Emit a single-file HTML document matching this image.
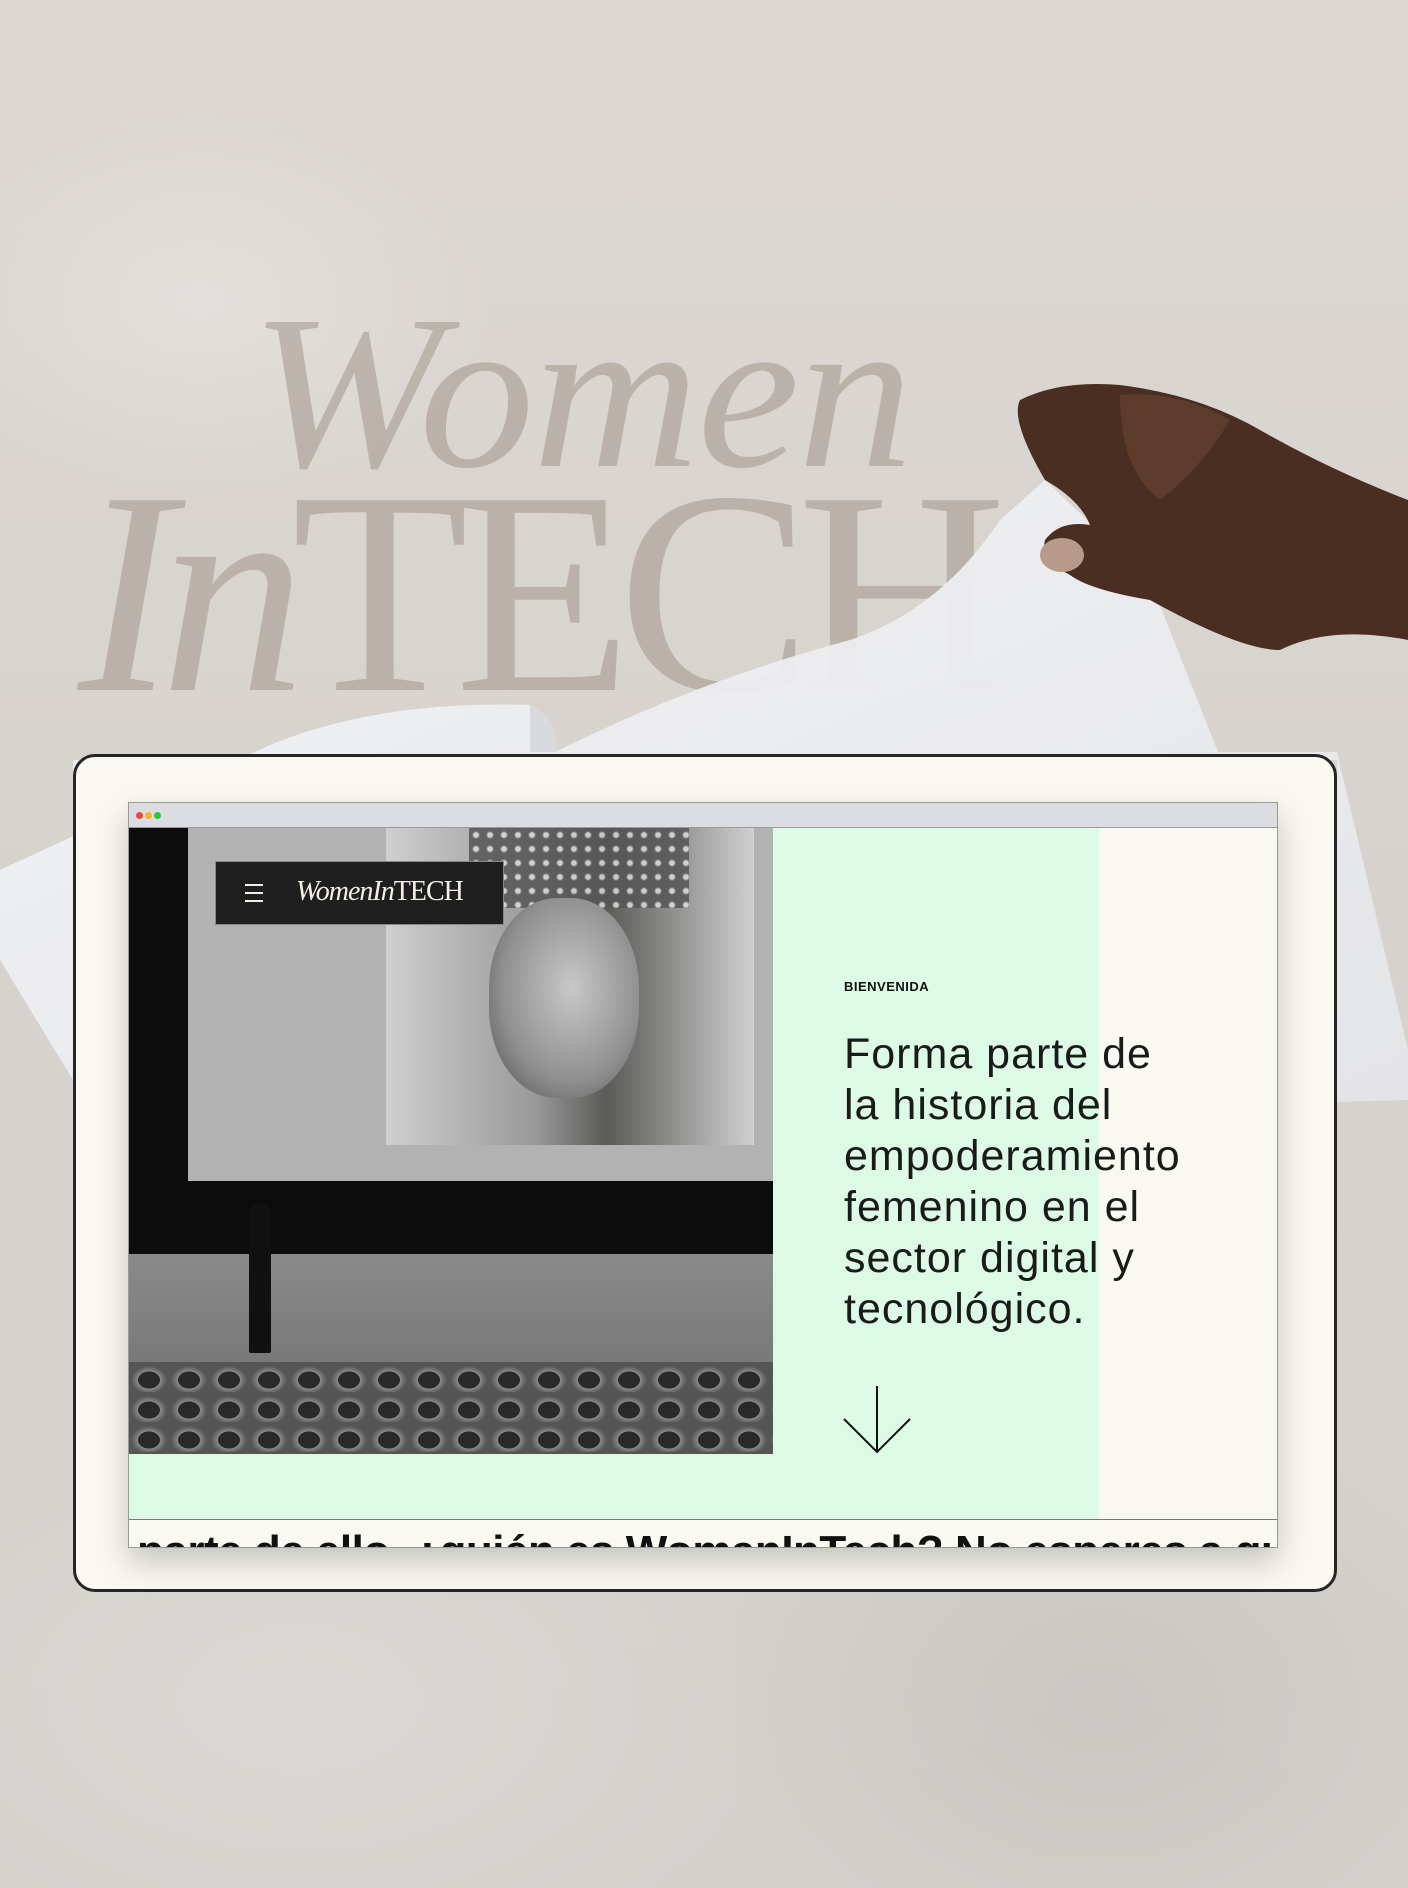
<!DOCTYPE html>
<html><head><meta charset="utf-8"><style>
*{margin:0;padding:0;box-sizing:border-box}
body{width:1408px;height:1888px;overflow:hidden;position:relative;background:#d9d4cf;font-family:"Liberation Sans",sans-serif}
.bg{position:absolute;inset:0;background:
radial-gradient(ellipse 300px 200px at 200px 300px,rgba(255,255,255,.25),transparent),
radial-gradient(ellipse 400px 300px at 1100px 1700px,rgba(0,0,0,.05),transparent),
radial-gradient(ellipse 500px 300px at 300px 1700px,rgba(255,255,255,.15),transparent),
linear-gradient(180deg,#dcd7d2,#d6d2cd 50%,#d4d1cd)}
.big{position:absolute;font-family:"Liberation Serif",serif;color:#9d9186;opacity:.5;white-space:nowrap;line-height:1;transform-origin:0 0}
.card{position:absolute;left:73px;top:754px;width:1264px;height:838px;background:#faf9f1;border:3px solid #262626;border-radius:22px}
.win{position:absolute;left:128px;top:802px;width:1150px;height:746px;background:#faf9f1;box-shadow:0 14px 30px rgba(0,0,0,.22);overflow:hidden;border:1px solid #999}
.tb{position:absolute;left:0;top:0;right:0;height:25px;background:#dcdde2;border-bottom:1px solid #999}
.dot{position:absolute;top:9px;width:7px;height:7px;border-radius:50%}
</style></head><body>
<div class="bg"></div>
<div class="big" style="left:250px;top:282px;font-size:220px;font-style:italic;letter-spacing:-2px;transform:scaleX(1.05)">Women</div>
<div class="big" style="left:78px;top:448px;font-size:290px;letter-spacing:-14px"><i>In</i>TECH</div>
<svg style="position:absolute;left:0;top:0" width="1408" height="1888">
<defs><linearGradient id="pg" x1="0" y1="0" x2="1" y2="1"><stop offset="0" stop-color="#f3f4f6"/><stop offset="1" stop-color="#e4e5e8"/></linearGradient></defs>
<path d="M0 870 L270 745 Q380 700 530 705 Q560 740 555 752 Q700 680 850 640 Q940 610 1000 520 L1045 480 L1150 580 L1218 752 L1337 752 L1408 1050 L1408 1100 L1337 1102 L1337 760 L73 760 L73 1080 L0 960 Z" fill="url(#pg)" opacity=".95"/>
<path d="M530 705 Q560 720 556 752 L530 752 Z" fill="#d8d9dc"/>
<path d="M1045 480 Q1010 420 1020 400 Q1060 380 1120 385 Q1200 395 1260 430 Q1330 470 1408 500 L1408 640 Q1330 625 1280 650 Q1240 650 1150 600 Q1090 590 1070 575 Q1040 560 1045 540 Q1060 520 1090 525 Q1080 500 1045 480 Z" fill="#4a2e22"/>
<path d="M1120 395 Q1180 390 1230 420 Q1200 470 1160 500 Q1120 470 1120 395Z" fill="#6b4634" opacity=".6"/>
<ellipse cx="1062" cy="555" rx="22" ry="17" fill="#b89a8a"/>
</svg>
<div class="card"></div>
<div class="win">
 <div class="tb"><div class="dot" style="left:7px;background:#f0473c"></div><div class="dot" style="left:16px;background:#f7b52b"></div><div class="dot" style="left:25px;background:#2bc63c"></div></div>
 <div style="position:absolute;left:0;top:25px;width:970px;height:692px;background:#dcfae6"></div>
 <div style="position:absolute;left:0;top:25px;width:644px;height:626px;background:#0c0c0c;overflow:hidden">
  <div style="position:absolute;left:59px;top:0;width:585px;height:353px;background:#b2b2b2"></div>
  <div style="position:absolute;left:257px;top:0;width:368px;height:317px;background:linear-gradient(90deg,#cfcfcf,#9a9a9a 40%,#5a5c58 60%,#d0d0d0)"></div>
  <div style="position:absolute;left:340px;top:0;width:220px;height:80px;background:radial-gradient(circle,#ddd 2px,#555 4px) 0 0/14px 14px;opacity:.85"></div>
  <div style="position:absolute;left:360px;top:70px;width:150px;height:200px;border-radius:45%;background:radial-gradient(ellipse at 55% 45%,#c8c8c8,#8f8f8f 60%,#4a4c48)"></div>
  <div style="position:absolute;left:0;top:426px;width:644px;height:200px;background:linear-gradient(180deg,#8a8a8a,#6a6a6a)"></div>
  <div style="position:absolute;left:0;top:534px;width:644px;height:92px;background:radial-gradient(ellipse 18px 14px at 50% 60%,#2a2a2a 60%,#8a8a8a 62%,#555 100%) 0 0/40px 30px"></div>
  <div style="position:absolute;left:120px;top:375px;width:22px;height:150px;background:#111;border-radius:10px 10px 2px 2px"></div>
 </div>
 <div style="position:absolute;left:86px;top:58px;width:289px;height:64px;background:#1f1f1f;border:1px solid #888;color:#f4f0e6">
  <div style="position:absolute;left:29px;top:22px;width:18px;height:2px;background:#f4f0e6;box-shadow:0 8px 0 #f4f0e6,0 16px 0 #f4f0e6"></div>
  <div style="position:absolute;left:80px;top:14px;font-family:'Liberation Serif',serif;font-size:28px;letter-spacing:-1px"><i>WomenIn</i>TECH</div>
 </div>
 <div style="position:absolute;left:715px;top:176px;font-size:13px;font-weight:bold;color:#111;letter-spacing:.5px">BIENVENIDA</div>
 <div style="position:absolute;left:715px;top:226px;font-size:43px;line-height:51px;color:#1a1a1a;width:420px;letter-spacing:1px">Forma parte de<br>la historia del<br>empoderamiento<br>femenino en el<br>sector digital y<br>tecnológico.</div>
 <svg style="position:absolute;left:713px;top:583px" width="70" height="68"><path d="M35 0 V66 M2 33 L35 66 L68 33" fill="none" stroke="#111" stroke-width="2"/></svg>
 <div style="position:absolute;left:0;top:716px;width:100%;height:1px;background:#777"></div>
 <div style="position:absolute;left:8px;top:724px;font-size:44px;font-weight:bold;color:#111;white-space:nowrap;letter-spacing:-.5px">parte de ello. ¿quién es WomanInTech? No esperes a qu</div>
</div>
</body></html>
